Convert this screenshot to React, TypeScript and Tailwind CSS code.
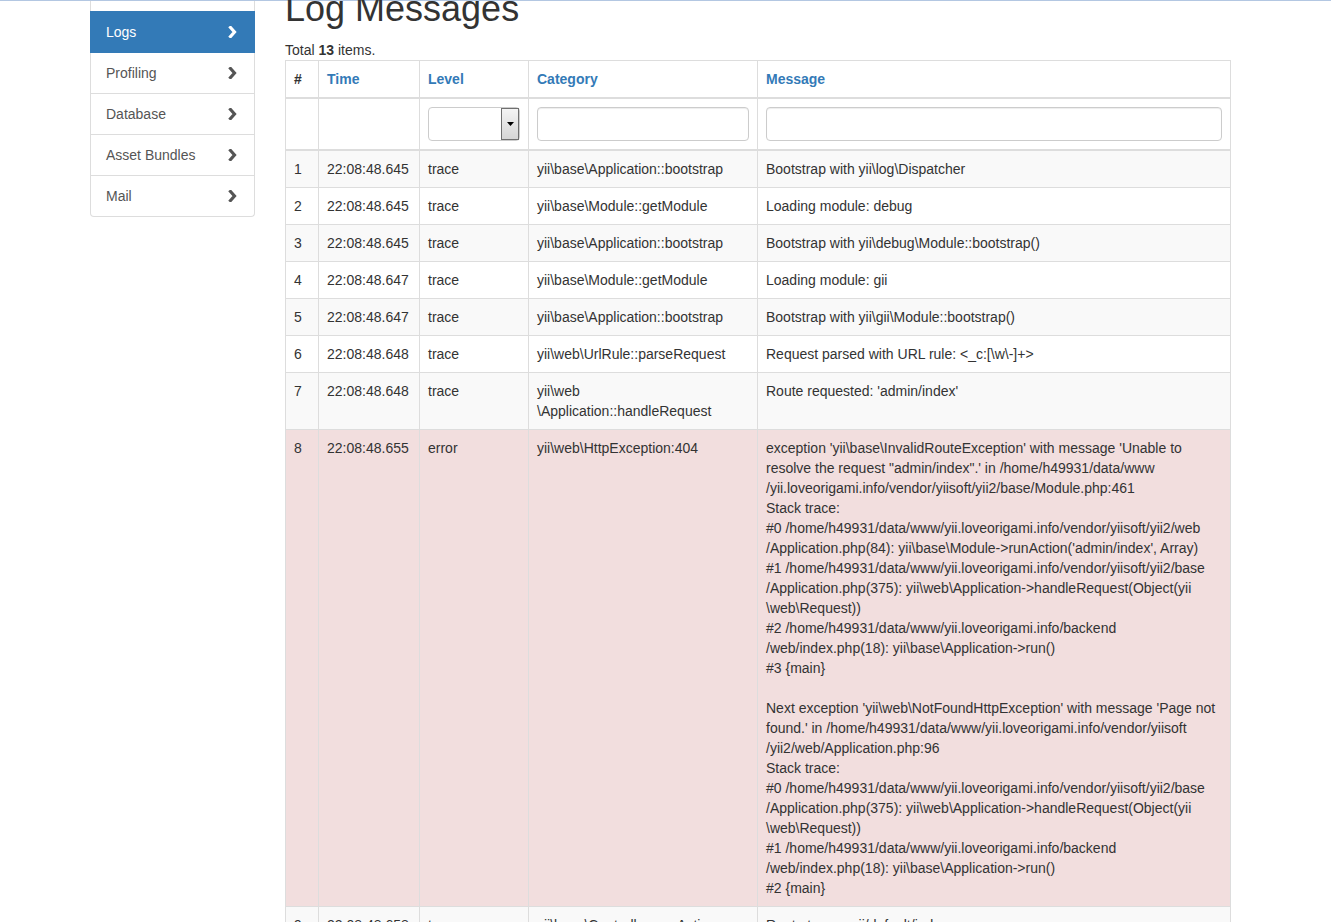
import React from "react";

type Row = {
  id: number;
  time: string;
  level: string;
  category: string[];
  message: string[];
  danger?: boolean;
};

const rows: Row[] = [
  { id: 1, time: "22:08:48.645", level: "trace", category: ["yii\\base\\Application::bootstrap"], message: ["Bootstrap with yii\\log\\Dispatcher"] },
  { id: 2, time: "22:08:48.645", level: "trace", category: ["yii\\base\\Module::getModule"], message: ["Loading module: debug"] },
  { id: 3, time: "22:08:48.645", level: "trace", category: ["yii\\base\\Application::bootstrap"], message: ["Bootstrap with yii\\debug\\Module::bootstrap()"] },
  { id: 4, time: "22:08:48.647", level: "trace", category: ["yii\\base\\Module::getModule"], message: ["Loading module: gii"] },
  { id: 5, time: "22:08:48.647", level: "trace", category: ["yii\\base\\Application::bootstrap"], message: ["Bootstrap with yii\\gii\\Module::bootstrap()"] },
  { id: 6, time: "22:08:48.648", level: "trace", category: ["yii\\web\\UrlRule::parseRequest"], message: ["Request parsed with URL rule: <_c:[\\w\\-]+>"] },
  { id: 7, time: "22:08:48.648", level: "trace", category: ["yii\\web", "\\Application::handleRequest"], message: ["Route requested: 'admin/index'"] },
  {
    id: 8,
    time: "22:08:48.655",
    level: "error",
    danger: true,
    category: ["yii\\web\\HttpException:404"],
    message: [
      "exception 'yii\\base\\InvalidRouteException' with message 'Unable to",
      "resolve the request \"admin/index\".' in /home/h49931/data/www",
      "/yii.loveorigami.info/vendor/yiisoft/yii2/base/Module.php:461",
      "Stack trace:",
      "#0 /home/h49931/data/www/yii.loveorigami.info/vendor/yiisoft/yii2/web",
      "/Application.php(84): yii\\base\\Module->runAction('admin/index', Array)",
      "#1 /home/h49931/data/www/yii.loveorigami.info/vendor/yiisoft/yii2/base",
      "/Application.php(375): yii\\web\\Application->handleRequest(Object(yii",
      "\\web\\Request))",
      "#2 /home/h49931/data/www/yii.loveorigami.info/backend",
      "/web/index.php(18): yii\\base\\Application->run()",
      "#3 {main}",
      "",
      "Next exception 'yii\\web\\NotFoundHttpException' with message 'Page not",
      "found.' in /home/h49931/data/www/yii.loveorigami.info/vendor/yiisoft",
      "/yii2/web/Application.php:96",
      "Stack trace:",
      "#0 /home/h49931/data/www/yii.loveorigami.info/vendor/yiisoft/yii2/base",
      "/Application.php(375): yii\\web\\Application->handleRequest(Object(yii",
      "\\web\\Request))",
      "#1 /home/h49931/data/www/yii.loveorigami.info/backend",
      "/web/index.php(18): yii\\base\\Application->run()",
      "#2 {main}",
    ],
  },
  { id: 9, time: "22:08:48.658", level: "trace", category: ["yii\\base\\Controller::runAction"], message: ["Route to run: gii/default/index"] },
  { id: 10, time: "22:08:48.661", level: "trace", category: ["yii\\base\\Module::getModule"], message: ["Loading module: gii"] },
];

const navItems = ["Logs", "Profiling", "Database", "Asset Bundles", "Mail"];

function Chevron({ active }: { active: boolean }) {
  return (
    <svg width="11" height="12" viewBox="0 0 11 12" className="shrink-0">
      <polyline
        points="3.5,1.5 7.5,6 3.5,10.5"
        fill="none"
        stroke={active ? "#ffffff" : "#555555"}
        strokeWidth="3.2"
        strokeLinecap="square"
      />
    </svg>
  );
}

function LevelSelect() {
  return (
    <div className="flex h-[34px] w-full rounded-[4px] border border-[#ccc] bg-white">
      <div className="flex-1" />
      <div className="flex w-[18px] items-center justify-center border border-[#707070] bg-gradient-to-b from-[#f4f4f4] to-[#d6d6d6]">
        <svg width="7" height="4" viewBox="0 0 7 4">
          <polygon points="0,0 7,0 3.5,4" fill="#000" />
        </svg>
      </div>
    </div>
  );
}

function TextFilter() {
  return <div className="h-[34px] w-full rounded-[4px] border border-[#ccc] bg-white shadow-[inset_0_1px_1px_rgba(0,0,0,0.075)]" />;
}

export default function App() {
  return (
    <div className="min-h-screen bg-white font-['Liberation_Sans',Arial,sans-serif] text-[14px] leading-[20px] text-[#333]">
      <div className="h-px bg-[#b3c7e2]" />
      <div className="flex">
        <div className="ml-[90px] w-[165px] shrink-0">
          <div className="h-[10px] border-x border-[#ddd]" />
          {navItems.map((item, i) => {
            const active = i === 0;
            const last = i === navItems.length - 1;
            return (
              <div
                key={item}
                className={`flex items-center justify-between pl-[15px] pr-[16px] ${
                  active
                    ? "h-[42px] bg-[#337ab7] text-white border border-[#337ab7]"
                    : "h-[41px] border-x border-b border-[#ddd] text-[#555] bg-white"
                } ${last ? "rounded-b-[4px]" : ""}`}
              >
                <span>{item}</span>
                <Chevron active={active} />
              </div>
            );
          })}
        </div>

        <div className="ml-[30px] w-[945px] shrink-0">
          <h1 className="-mt-[12px] mb-[11px] text-[36px] leading-[40px] font-medium text-[#333]">Log Messages</h1>
          <div>
            Total <b>13</b> items.
          </div>
          <table className="w-[945px] table-fixed border border-[#ddd]">
            <colgroup>
              <col className="w-[33px]" />
              <col className="w-[101px]" />
              <col className="w-[109px]" />
              <col className="w-[229px]" />
              <col className="w-[473px]" />
            </colgroup>
            <thead>
              <tr>
                <th className="border border-b-2 border-[#ddd] p-2 text-left align-bottom font-bold">#</th>
                <th className="border border-b-2 border-[#ddd] p-2 text-left align-bottom font-bold text-[#337ab7]">Time</th>
                <th className="border border-b-2 border-[#ddd] p-2 text-left align-bottom font-bold text-[#337ab7]">Level</th>
                <th className="border border-b-2 border-[#ddd] p-2 text-left align-bottom font-bold text-[#337ab7]">Category</th>
                <th className="border border-b-2 border-[#ddd] p-2 text-left align-bottom font-bold text-[#337ab7]">Message</th>
              </tr>
              <tr>
                <td className="border border-b-2 border-[#ddd] p-2">&nbsp;</td>
                <td className="border border-b-2 border-[#ddd] p-2">&nbsp;</td>
                <td className="border border-b-2 border-[#ddd] p-2">
                  <LevelSelect />
                </td>
                <td className="border border-b-2 border-[#ddd] p-2">
                  <TextFilter />
                </td>
                <td className="border border-b-2 border-[#ddd] p-2">
                  <TextFilter />
                </td>
              </tr>
            </thead>
            <tbody>
              {rows.map((r, i) => {
                const bg = r.danger ? "bg-[#f2dede]" : i % 2 === 0 ? "bg-[#f9f9f9]" : "bg-white";
                return (
                  <tr key={r.id} className={bg}>
                    <td className="border border-[#ddd] p-2 align-top">{r.id}</td>
                    <td className="border border-[#ddd] p-2 align-top">{r.time}</td>
                    <td className="border border-[#ddd] p-2 align-top">{r.level}</td>
                    <td className="border border-[#ddd] p-2 align-top">
                      {r.category.map((c, k) => (
                        <div key={k}>{c}</div>
                      ))}
                    </td>
                    <td className="border border-[#ddd] p-2 align-top">
                      {r.message.map((m, k) => (
                        <div key={k} className="whitespace-pre">
                          {m === "" ? "\u00a0" : m}
                        </div>
                      ))}
                    </td>
                  </tr>
                );
              })}
            </tbody>
          </table>
        </div>
      </div>
    </div>
  );
}
